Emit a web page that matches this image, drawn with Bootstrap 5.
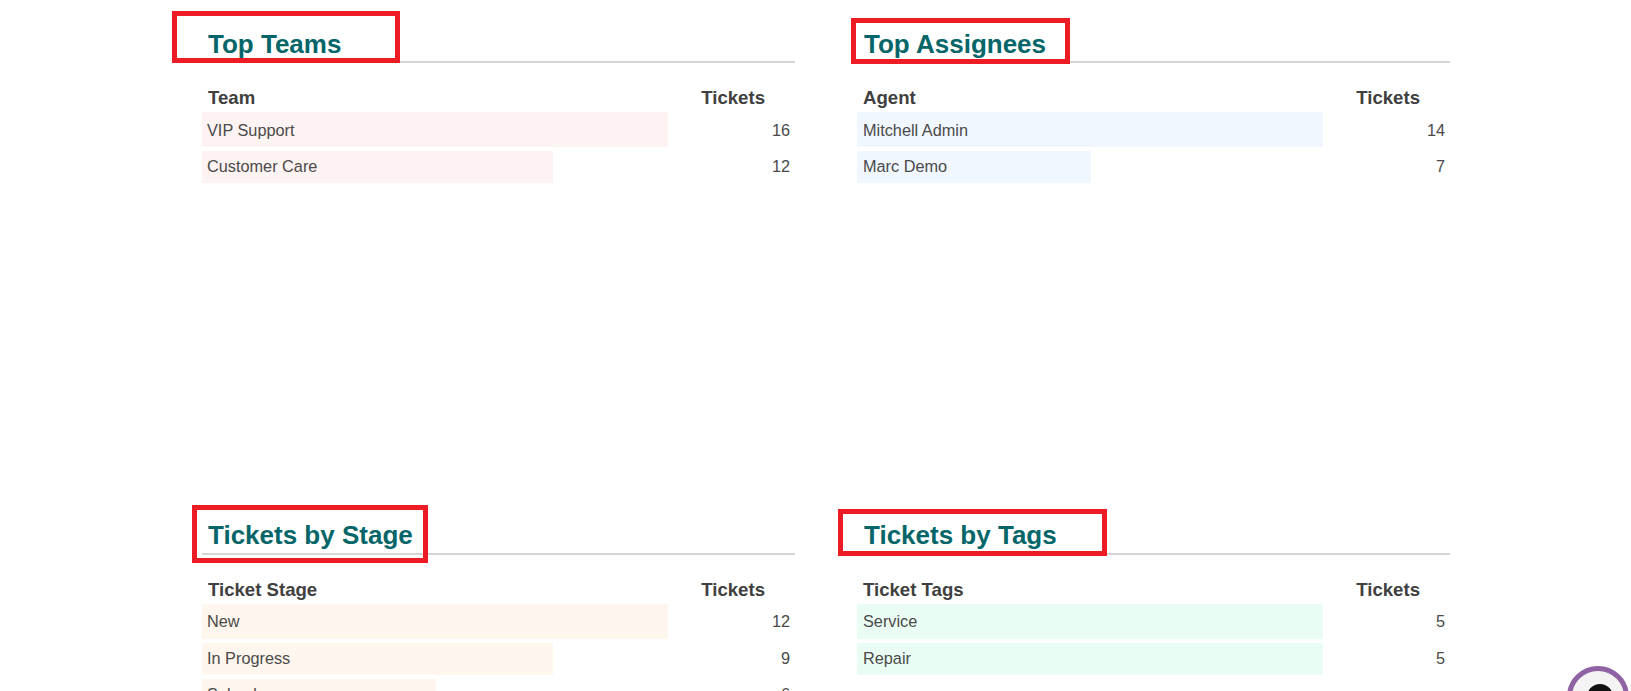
<!DOCTYPE html>
<html lang="en">
<head>
<meta charset="utf-8">
<title>Helpdesk report</title>
<link href="https://cdn.jsdelivr.net/npm/bootstrap@5.3.0/dist/css/bootstrap.min.css" rel="stylesheet">
<style>
html, body { height: 691px; overflow: hidden; background: #fff; }
body { font-family: "Liberation Sans", Arial, sans-serif; font-size: 16.3px; color: #4a4a4a; position: relative; }
.sheet { width: 1249px; margin-left: 202px; display: grid; grid-template-columns: 593px 593px; column-gap: 62px; grid-template-rows: 492px auto; }
.panel { position: relative; }
.panel-title { height: 63px; margin: 0; padding: 29px 0 0 6px; font-size: 26px; line-height: 29px; font-weight: 700; color: #05666a; border-bottom: 2px solid #d6d6d6; }
.panel:nth-child(-n+2) .panel-title { padding-top: 30px; }
.panel:nth-child(even) .panel-title { padding-left: 7px; }
.panel-head { display: flex; justify-content: space-between; height: 49px; padding: 24px 30px 0 6px; font-size: 18.6px; line-height: 21px; font-weight: 700; color: #404040; }
.panel-row { display: flex; align-items: stretch; margin-bottom: 4px; height: 32px; }
.panel-row.first-row { height: 35px; }
.track { width: 466px; flex: none; }
.fill { height: 100%; padding-left: 5px; padding-bottom: 2px; display: flex; align-items: center; white-space: nowrap; }
.panel:nth-child(even) .fill { padding-left: 6px; }
.num { flex: 1; text-align: right; padding-right: 5px; padding-bottom: 2px; align-self: center; }
.first-row .fill, .first-row .num { padding-bottom: 0; }
.panel:nth-child(-n+2) .first-row .fill, .panel:nth-child(-n+2) .first-row .num { padding-top: 2px; }
.pink { background: #fdf3f2; }
.blue { background: #f0f7ff; }
.orange { background: #fff6ed; }
.mint { background: #eafdf4; }
.callout { position: absolute; border: 5px solid #ed1c24; pointer-events: none; }
.bot { position: absolute; left: 1567px; top: 666px; width: 62px; height: 62px; display: block; }
</style>
</head>
<body>
<div class="sheet">
  <section class="panel">
    <h2 class="panel-title">Top Teams</h2>
    <div class="panel-head"><span>Team</span><span>Tickets</span></div>
    <div class="panel-row first-row"><div class="track"><div class="fill pink" style="width:100%">VIP Support</div></div><div class="num">16</div></div>
    <div class="panel-row"><div class="track"><div class="fill pink" style="width:75.3%">Customer Care</div></div><div class="num">12</div></div>
  </section>
  <section class="panel">
    <h2 class="panel-title">Top Assignees</h2>
    <div class="panel-head"><span>Agent</span><span>Tickets</span></div>
    <div class="panel-row first-row"><div class="track"><div class="fill blue" style="width:100%">Mitchell Admin</div></div><div class="num">14</div></div>
    <div class="panel-row"><div class="track"><div class="fill blue" style="width:50.2%">Marc Demo</div></div><div class="num">7</div></div>
  </section>
  <section class="panel">
    <h2 class="panel-title">Tickets by Stage</h2>
    <div class="panel-head"><span>Ticket Stage</span><span>Tickets</span></div>
    <div class="panel-row first-row"><div class="track"><div class="fill orange" style="width:100%">New</div></div><div class="num">12</div></div>
    <div class="panel-row"><div class="track"><div class="fill orange" style="width:75.3%">In Progress</div></div><div class="num">9</div></div>
    <div class="panel-row"><div class="track"><div class="fill orange" style="width:50.2%">Solved</div></div><div class="num">6</div></div>
  </section>
  <section class="panel">
    <h2 class="panel-title">Tickets by Tags</h2>
    <div class="panel-head"><span>Ticket Tags</span><span>Tickets</span></div>
    <div class="panel-row first-row"><div class="track"><div class="fill mint" style="width:100%">Service</div></div><div class="num">5</div></div>
    <div class="panel-row"><div class="track"><div class="fill mint" style="width:100%">Repair</div></div><div class="num">5</div></div>
  </section>
</div>
<div class="callout" style="left:172px;top:11px;width:228px;height:52px"></div>
<div class="callout" style="left:851px;top:18px;width:219px;height:46px"></div>
<div class="callout" style="left:192px;top:505px;width:236px;height:58px"></div>
<div class="callout" style="left:838px;top:509px;width:269px;height:47px"></div>
<svg class="bot" viewBox="0 0 62 62" aria-hidden="true">
  <circle cx="31" cy="31" r="28.5" fill="#f4f4f4" stroke="#8e62a3" stroke-width="5"/>
  <circle cx="33" cy="31" r="13" fill="#111"/>
</svg>
</body>
</html>
